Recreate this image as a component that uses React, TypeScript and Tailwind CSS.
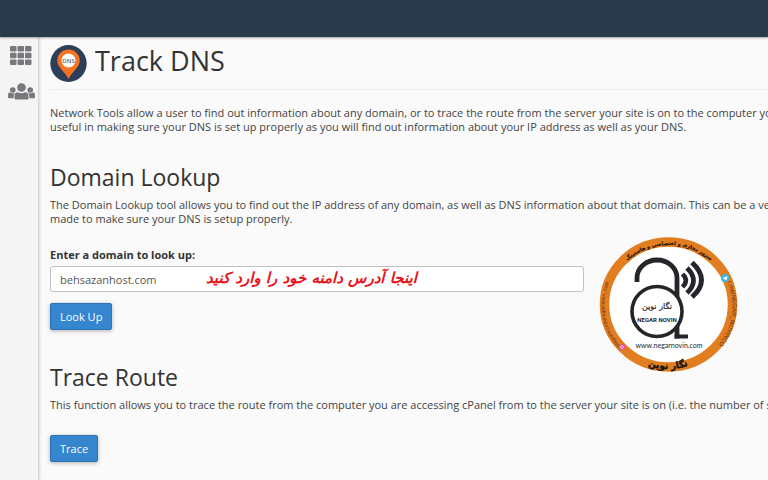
import { useState } from 'react';

function GridIcon() {
  const cols = [0, 7.5, 15];
  return (
    <svg width="22" height="19" viewBox="0 0 22 19" fill="#77787b" aria-hidden="true">
      {cols.map(x =>
        [0, 6.8, 13.6].map(y => <rect key={`${x}-${y}`} x={x} y={y} width="6.5" height="5.4" rx="1" />)
      )}
    </svg>
  );
}

function UsersIcon() {
  return (
    <svg width="27" height="17" viewBox="0 0 27 17" fill="#77787b" aria-hidden="true">
      <circle cx="13.5" cy="4.5" r="4.3" />
      <circle cx="4.8" cy="7" r="2.8" />
      <circle cx="22.2" cy="7" r="2.8" />
      <path d="M6.500 15.500v-2.500q0-3.500 3.500-3.800q3.500 2 7 0q3.500 .3 3.500 3.800v2.500q0 1-1 1H7.500q-1 0-1-1z" />
      <path d="M0 14.500v-2.500q0-2.500 1.800-2.700q3 2 5.600.3q-1.800 1.300-1.800 5.700H1q-1 0-1-.8z" />
      <path d="M27 14.500v-2.500q0-2.500-1.800-2.700q-3 2-5.600.3q1.800 1.300 1.800 5.700H26q1 0 1-.8z" />
    </svg>
  );
}

function DnsIcon() {
  return (
    <svg width="37" height="38" viewBox="0 0 37 38" aria-hidden="true">
      <ellipse cx="18.500" cy="19.500" rx="18.200" ry="18.500" fill="#2d3e5a" />
      <path d="M18.500 35C16 28.500 7.200 23.500 7.200 16.500a11.300 11 0 0 1 22.600 0C29.800 23.500 21 28.500 18.500 35z" fill="#f37321" />
      <circle cx="18.500" cy="16.500" r="7" fill="#fff" />
      <text x="18.500" y="18.500" textAnchor="middle" fontSize="6" fontWeight="600" fill="#5b5f6a" fontFamily="Open Sans, sans-serif">
        DNS
      </text>
    </svg>
  );
}

function Watermark() {
  return (
    <svg width="160" height="150" viewBox="0 0 160 150" role="img" aria-label="Negar Novin">
      <defs>
        <path id="ring-top" d="M17 75a62 60 0 0 1 124 0" />
        <path id="ring-bottom" d="M13 75a65 64 0 0 0 130 0" />
        <path id="ring-left" d="M53 132A62 61 0 0 1 34 31" />
        <path id="ring-right" d="M134 45A63 62 0 0 1 112 129" />
      </defs>
      <ellipse cx="78.500" cy="74.500" rx="64" ry="62.500" fill="#fff" stroke="#e27d20" strokeWidth="9.500" />

      {/* padlock shaped "a" */}
      <g fill="none" stroke="#252629">
        <path d="M47 52v-4a20 18 0 0 1 40 0v60.500" strokeWidth="4.800" />
        <path d="M84.500 106.500h13.500" strokeWidth="4" />
        <circle cx="67" cy="81.500" r="25" strokeWidth="3.600" fill="#fff" />
        <path d="M92.500 44q6.500 6.500 0 13" strokeWidth="4.500" />
        <path d="M97 38q13 12.500 0 25" strokeWidth="4.800" />
        <path d="M102 32.500q19 17.500 0 34.500" strokeWidth="5" />
      </g>

      <g textAnchor="middle" fill="#252629">
        <text x="67" y="79" fontSize="8" fontFamily="DejaVu Sans, sans-serif" direction="rtl" stroke="#252629" strokeWidth="0.2">
          نگار نوین
        </text>
        <text x="67" y="92" fontSize="6" fontFamily="Roboto, sans-serif" fontWeight="700">NEGAR NOVIN</text>
        <text x="79" y="118" fontSize="7" fontFamily="Lato, sans-serif">www.negarnovin.com</text>
      </g>
      <g fill="#1d1712" stroke="#1d1712" textAnchor="middle" fontFamily="DejaVu Sans, sans-serif" fontWeight="700">
        <text fontSize="5" strokeWidth="0.2">
          <textPath href="#ring-top" startOffset="50%">سرور مجازی و اختصاصی و هاستینگ</textPath>
        </text>
        <text fontSize="9" strokeWidth="0.5">
          <textPath href="#ring-bottom" startOffset="50%">نگار نوین</textPath>
        </text>
      </g>
      <g fill="#5a3518" fontFamily="Liberation Sans, sans-serif">
        <text fontSize="5">
          <textPath href="#ring-left" startOffset="25">instagram.com/negarnovin_com</textPath>
        </text>
        <text fontSize="6">
          <textPath href="#ring-right" startOffset="8">t.me/NEGAR_NOVINCO</textPath>
        </text>
      </g>
      <circle cx="135" cy="48" r="4" fill="#32b5e8" />
      <path d="M132.500 48l5-2-1 4.500-1.500-1z" fill="#fff" />
      <rect x="29" y="114" width="6" height="6" rx="2" fill="#e8508c" />
      <circle cx="32" cy="117" r="1.500" fill="none" stroke="#f9c6dc" />
    </svg>
  );
}

const buttonClass =
  'h-[27px] px-[9px] rounded-[2px] border border-[#2c73b5] bg-[#3685cf] text-[11px] leading-[14px] text-white shadow-[0_1px_4px_rgba(0,0,0,0.3)]';

export default function App() {
  const [domain, setDomain] = useState('behsazanhost.com');

  return (
    <div className="relative flex min-h-screen flex-col overflow-hidden bg-[#fafafa] font-['Open_Sans',sans-serif] text-[11px] leading-[14px] text-[#444]">
      <header className="z-10 h-[37px] shrink-0 bg-[#2a3a4a] shadow-[0_1px_2px_rgba(0,0,0,0.35)]" />

      <div className="flex flex-1">
        <nav className="flex w-[38px] shrink-0 flex-col items-center gap-[18px] bg-[#f4f4f4] pt-[9px] pl-1 shadow-[0_0_3px_1px_rgba(0,0,0,0.22)]">
          <a href="#tools" aria-label="Tools">
            <GridIcon />
          </a>
          <a href="#users" aria-label="User Manager">
            <UsersIcon />
          </a>
        </nav>

        <main className="min-w-0 flex-1 pl-3 whitespace-nowrap">
          <div className="flex h-[53px] items-start gap-2 border-b border-[#eee] pt-[7px]">
            <DnsIcon />
            <h1 className="text-[27px] leading-[34px] text-[#333]">Track DNS</h1>
          </div>
          <p className="mt-4">
            Network Tools allow a user to find out information about any domain, or to trace the route from the server your site is on to the computer you a
            <br />
            useful in making sure your DNS is set up properly as you will find out information about your IP address as well as your DNS.
          </p>

          <section className="mt-7">
            <h2 className="text-[23px] leading-[30px] text-[#333]">Domain Lookup</h2>
            <p className="mt-1.5">
              The Domain Lookup tool allows you to find out the IP address of any domain, as well as DNS information about that domain. This can be a very u
              <br />
              made to make sure your DNS is setup properly.
            </p>
            <label htmlFor="domain" className="mt-[22px] block font-bold text-[#333]">
              Enter a domain to look up:
            </label>
            <div className="relative mt-1 mr-[184px]">
              <input
                id="domain"
                type="text"
                value={domain}
                onChange={e => setDomain(e.target.value)}
                className="block h-[26px] w-full rounded-[3px] border border-[#c0c0c0] bg-white px-[9px] text-[#555] outline-none"
              />
              <span
                dir="rtl"
                className="pointer-events-none absolute top-1 left-[156px] font-['DejaVu_Sans',sans-serif] text-[15px] leading-4 font-bold text-[#e8141c] italic"
              >
                اینجا آدرس دامنه خود را وارد کنید
              </span>
            </div>
            <button type="button" className={`mt-[11px] ${buttonClass}`}>
              Look Up
            </button>
          </section>

          <section className="mt-8">
            <h2 className="text-[23px] leading-[30px] text-[#333]">Trace Route</h2>
            <p className="mt-1.5">
              This function allows you to trace the route from the computer you are accessing cPanel from to the server your site is on (i.e. the number of serv
            </p>
            <button type="button" className={`mt-[23px] ${buttonClass}`}>
              Trace
            </button>
          </section>
        </main>
      </div>

      <div className="absolute top-[230px] right-[18px]">
        <Watermark />
      </div>
    </div>
  );
}
